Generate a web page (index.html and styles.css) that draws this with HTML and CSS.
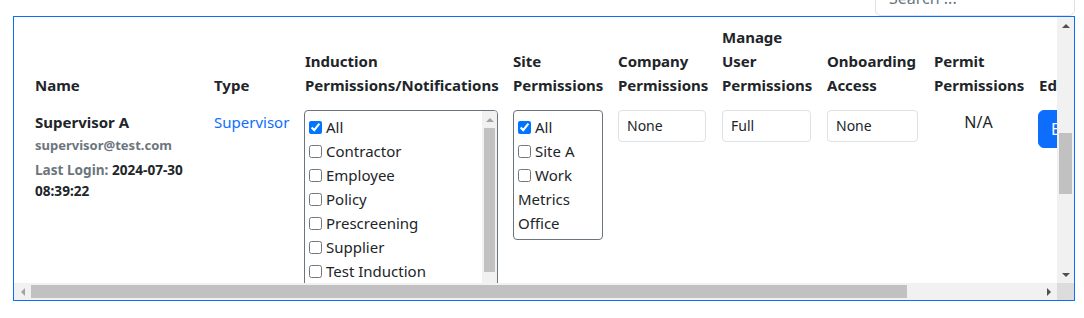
FILE: index.html
```html
<!DOCTYPE html>
<html lang="en">
<head>
<meta charset="utf-8">
<title>Users</title>
<link rel="stylesheet" href="styles.css">
</head>
<body>
<div class="page">
  <div class="toolbar">
    <input class="search" type="text" placeholder="Search ...">
  </div>
  <div class="frame">
    <div class="viewport">
      <table class="users">
        <colgroup>
          <col class="c-name"><col class="c-type"><col class="c-ind"><col class="c-site"><col class="c-comp"><col class="c-man"><col class="c-onb"><col class="c-perm"><col class="c-edit">
        </colgroup>
        <thead>
          <tr>
            <th>Name</th>
            <th>Type</th>
            <th>Induction Permissions/Notifications</th>
            <th>Site Permissions</th>
            <th>Company Permissions</th>
            <th>Manage User Permissions</th>
            <th>Onboarding Access</th>
            <th>Permit Permissions</th>
            <th>Edit</th>
          </tr>
        </thead>
        <tbody>
          <tr>
            <td>
              <div class="uname">Supervisor A</div>
              <div class="email">supervisor@test.com</div>
              <div class="login"><span class="muted">Last Login: </span>2024-07-30 08:39:22</div>
            </td>
            <td><a class="type-link" href="#">Supervisor</a></td>
            <td>
              <div class="listbox ind">
                <div class="list-items">
                  <label class="opt"><input type="checkbox" checked>All</label>
                  <label class="opt"><input type="checkbox">Contractor</label>
                  <label class="opt"><input type="checkbox">Employee</label>
                  <label class="opt"><input type="checkbox">Policy</label>
                  <label class="opt"><input type="checkbox">Prescreening</label>
                  <label class="opt"><input type="checkbox">Supplier</label>
                  <label class="opt"><input type="checkbox">Test Induction</label>
                  <label class="opt"><input type="checkbox">Visitor</label>
                </div>
                <div class="mini-vbar">
                  <div class="sb-btn"><span class="tri up"></span></div>
                  <div class="mini-thumb-track"><div class="mini-thumb"></div></div>
                </div>
              </div>
            </td>
            <td>
              <div class="listbox site">
                <label class="opt"><input type="checkbox" checked>All</label>
                <label class="opt"><input type="checkbox">Site A</label>
                <label class="opt"><input type="checkbox">Work Metrics Office</label>
              </div>
            </td>
            <td><div class="select">None</div></td>
            <td><div class="select">Full</div></td>
            <td><div class="select">None</div></td>
            <td class="center na">N/A</td>
            <td><button class="btn-edit" type="button">Edit</button></td>
          </tr>
        </tbody>
      </table>
    </div>
    <div class="vbar">
      <div class="sb-btn"><span class="tri up"></span></div>
      <div class="vtrack"><div class="vthumb"></div></div>
      <div class="sb-btn"><span class="tri down"></span></div>
    </div>
    <div class="hbar">
      <div class="sb-btn"><span class="tri left"></span></div>
      <div class="htrack"><div class="hthumb"></div></div>
      <div class="sb-btn"><span class="tri right"></span></div>
    </div>
    <div class="corner"></div>
  </div>
</div>
</body>
</html>
```

FILE: styles.css
```css
* { box-sizing: border-box; }

html, body {
  margin: 0;
  padding: 0;
  background: #fff;
  overflow: hidden;
}

body {
  font-family: "Noto Sans", "Open Sans", "Liberation Sans", sans-serif;
  font-size: 15px;
  line-height: 24px;
  color: #212529;
}

.page {
  padding: 0 9px 0 13px;
}

.toolbar {
  display: flex;
  justify-content: flex-end;
}

.search {
  width: 200px;
  height: 36px;
  margin-top: -20px;
  border: 1px solid #dee2e6;
  border-radius: 6px;
  padding: 0 13px;
  font: inherit;
  font-size: 16px;
  color: #212529;
  background: #fff;
  outline: none;
}
.search::placeholder { color: #6c757d; }

.frame {
  height: 285px;
  border: 1px solid #0d6efd;
  display: grid;
  grid-template-columns: 1fr 17px;
  grid-template-rows: 1fr 17px;
}

.viewport {
  overflow: hidden;
  min-width: 0;
  min-height: 0;
  padding-left: 13px;
}

.users {
  border-collapse: collapse;
  table-layout: fixed;
  width: 1100px;
}

.c-name { width: 179px; }
.c-type { width: 91px; }
.c-ind { width: 208px; }
.c-site { width: 105px; }
.c-comp { width: 104px; }
.c-man { width: 105px; }
.c-onb { width: 107px; }
.c-perm { width: 105px; }
.c-edit { width: 96px; }

th {
  text-align: left;
  vertical-align: bottom;
  font-weight: 700;
  padding: 8px;
}

td {
  vertical-align: top;
  padding: 5px 8px 8px 8px;
}

td.center { text-align: center; }
td.na { font-size: 16px; }

.uname {
  font-size: 15px;
  font-weight: 700;
  line-height: 24px;
}

.email {
  font-size: 13px;
  font-weight: 700;
  line-height: 20px;
  color: #6c757d;
  margin-top: 1px;
}

.login {
  font-size: 13.6px;
  font-weight: 700;
  line-height: 21px;
  margin-top: 4px;
}

.muted { color: #6c757d; }

.type-link {
  color: #0d6efd;
  text-decoration: none;
}

.listbox {
  border: 1px solid #6c757d;
  border-radius: 4px;
  background: #fff;
}

.listbox.ind {
  width: 194px;
  margin-left: -1px;
  height: 200px;
  display: grid;
  grid-template-columns: 1fr 15px;
  overflow: hidden;
}

.list-items {
  padding: 4px;
  overflow: hidden;
}

.listbox.site {
  width: 90px;
  padding: 4px;
}

.opt {
  display: block;
  line-height: 24px;
}

.opt input {
  width: 13px;
  height: 13px;
  margin: 0 4px 0 0;
  vertical-align: -1px;
}

.mini-vbar {
  background: #f1f1f1;
  display: flex;
  flex-direction: column;
}

.mini-vbar .sb-btn {
  height: 17px;
}

.mini-thumb-track {
  flex: 1;
  padding: 0 2px;
}

.mini-thumb {
  height: 144px;
  background: #c1c1c1;
}

.select {
  border: 1px solid #dee2e6;
  border-radius: 4px;
  height: 32px;
  font-size: 14px;
  line-height: 30px;
  padding: 0 8px;
  background: #fff;
}

.btn-edit {
  font: inherit;
  font-size: 16px;
  line-height: 24px;
  color: #fff;
  background: #0d6efd;
  border: 1px solid #0d6efd;
  border-radius: 6px;
  padding: 6px 12px;
  margin-left: -1px;
}

/* fake scrollbars */
.vbar {
  background: #f1f1f1;
  display: flex;
  flex-direction: column;
}

.vtrack {
  flex: 1;
  padding: 99px 2px 0 2px;
}

.vthumb {
  height: 61px;
  background: #c1c1c1;
}

.hbar {
  background: #f1f1f1;
  display: flex;
}

.htrack {
  flex: 1;
  padding: 2px 0;
}

.hthumb {
  width: 876px;
  height: 100%;
  background: #c1c1c1;
}

.corner {
  background: #dcdcdc;
}

.sb-btn {
  width: 17px;
  height: 17px;
  flex: none;
  display: flex;
  align-items: center;
  justify-content: center;
}

.vbar .sb-btn, .mini-vbar .sb-btn { width: 100%; }

.tri {
  width: 0;
  height: 0;
  border-style: solid;
}

.tri.up {
  border-width: 0 4px 4px 4px;
  border-color: transparent transparent #505050 transparent;
}
.mini-vbar .tri.up {
  border-color: transparent transparent #a3a3a3 transparent;
}

.tri.down {
  border-width: 4px 4px 0 4px;
  border-color: #505050 transparent transparent transparent;
}

.tri.left {
  border-width: 4px 4px 4px 0;
  border-color: transparent #a3a3a3 transparent transparent;
}

.tri.right {
  border-width: 4px 0 4px 4px;
  border-color: transparent transparent transparent #505050;
}
```
